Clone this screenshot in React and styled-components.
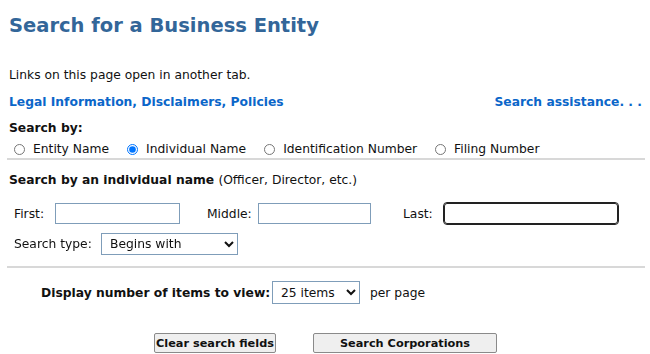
import React from "react";
import styled, { createGlobalStyle } from "styled-components";

const Global = createGlobalStyle`
  html, body { margin: 0; padding: 0; background: #fff; }
  body { font-family: "DejaVu Sans", Verdana, sans-serif; font-size: 12.3px; color: #111; }
`;

const Page = styled.div`
  padding: 13px 8px 0 8px;
  width: 650px;
  box-sizing: border-box;
`;

const Title = styled.h1`
  margin: 0 0 0 1px;
  font-size: 19.5px;
  font-weight: bold;
  color: #336699;
  line-height: 26px;
`;

const Note = styled.p`
  margin: 28px 0 0 1px;
  line-height: 16px;
`;

const LinkRow = styled.div`
  display: flex;
  justify-content: space-between;
  margin: 11px 0 0 1px;
  line-height: 16px;
`;

const Link = styled.a`
  color: #0b66c9;
  font-weight: bold;
  text-decoration: none;
`;

const Label = styled.div`
  font-weight: bold;
  margin: ${(p) => p.$mt || 0}px 0 0 1px;
  line-height: 16px;
`;

const RadioRow = styled.div`
  display: flex;
  align-items: center;
  gap: 18px;
  margin: 5px 0 0 6px;
  line-height: 16px;
`;

const RadioLabel = styled.label`
  display: flex;
  align-items: center;
  gap: 8px;
`;

const Radio = styled.input`
  margin: 0;
  width: 11px;
  height: 11px;
`;

const Rule = styled.hr`
  border: none;
  border-top: 2px solid #d8d8d8;
  margin: ${(p) => p.$mt || 0}px 0 0 -1px;
  width: 638px;
`;

const Normal = styled.span`
  font-weight: normal;
`;

const FieldRow = styled.div`
  display: flex;
  align-items: center;
  margin: ${(p) => p.$mt || 0}px 0 0 6px;
`;

const FieldLabel = styled.span`
  box-sizing: border-box;
  width: ${(p) => p.$w}px;
  padding-left: ${(p) => p.$pl || 0}px;
  white-space: nowrap;
`;

const TextInput = styled.input`
  box-sizing: border-box;
  width: ${(p) => p.$w}px;
  height: 21px;
  border: 1px solid ${(p) => (p.$focus ? "#222" : "#7f9db9")};
  border-radius: ${(p) => (p.$focus ? "3px" : "0")};
  outline: ${(p) => (p.$focus ? "1px solid #222" : "none")};
  font-family: inherit;
  font-size: 12px;
  padding: 1px 3px;
  margin: 0 0 0 ${(p) => (p.$focus ? 1 : 0)}px;
`;

const Select = styled.select`
  box-sizing: border-box;
  width: ${(p) => p.$w}px;
  height: ${(p) => p.$h || 22}px;
  border: 1px solid #7f9db9;
  border-radius: 0;
  background: #fff;
  font-family: inherit;
  font-size: 12.3px;
  color: #111;
  padding: 0 2px 0 4px;
  margin: 0;
`;

const DisplayRow = styled.div`
  display: flex;
  align-items: center;
  margin: 13px 0 0 33px;
`;

const Bold = styled.span`
  font-weight: bold;
  width: 231px;
  white-space: nowrap;
`;

const After = styled.span`
  margin-left: 10px;
`;

const ButtonRow = styled.div`
  display: flex;
  justify-content: flex-start;
  gap: 37px;
  margin: 29px 0 0 146px;
`;

const Button = styled.button`
  box-sizing: border-box;
  width: ${(p) => p.$w}px;
  height: 20px;
  font-family: inherit;
  font-size: 11.3px;
  font-weight: bold;
  color: #111;
  background: #efefef;
  border: 1px solid #8a8a8a;
  border-radius: 2px;
  padding: 0;
`;

export default function App() {
  return (
    <Page>
      <Global />
      <Title>Search for a Business Entity</Title>
      <Note>Links on this page open in another tab.</Note>
      <LinkRow>
        <Link href="#">Legal Information, Disclaimers, Policies</Link>
        <Link href="#">Search assistance. . .</Link>
      </LinkRow>
      <Label $mt={10}>Search by:</Label>
      <RadioRow>
        <RadioLabel><Radio type="radio" name="by" />Entity Name</RadioLabel>
        <RadioLabel><Radio type="radio" name="by" defaultChecked />Individual Name</RadioLabel>
        <RadioLabel><Radio type="radio" name="by" />Identification Number</RadioLabel>
        <RadioLabel><Radio type="radio" name="by" />Filing Number</RadioLabel>
      </RadioRow>
      <Rule $mt={1} />
      <Label $mt={12}>
        Search by an individual name <Normal>(Officer, Director, etc.)</Normal>
      </Label>
      <FieldRow $mt={15}>
        <FieldLabel $w={41}>First:</FieldLabel>
        <TextInput $w={125} />
        <FieldLabel $w={78} $pl={27}>Middle:</FieldLabel>
        <TextInput $w={113} />
        <FieldLabel $w={72} $pl={32}>Last:</FieldLabel>
        <TextInput $w={174} $focus autoFocus />
      </FieldRow>
      <FieldRow $mt={9}>
        <FieldLabel $w={87}>Search type:</FieldLabel>
        <Select $w={137} defaultValue="b">
          <option value="b">Begins with</option>
          <option value="c">Contains</option>
          <option value="e">Exact match</option>
        </Select>
      </FieldRow>
      <Rule $mt={11} />
      <DisplayRow>
        <Bold>Display number of items to view:</Bold>
        <Select $w={88} $h={23} defaultValue="25">
          <option value="25">25 items</option>
          <option value="50">50 items</option>
          <option value="100">100 items</option>
        </Select>
        <After>per page</After>
      </DisplayRow>
      <ButtonRow>
        <Button $w={122}>Clear search fields</Button>
        <Button $w={184}>Search Corporations</Button>
      </ButtonRow>
    </Page>
  );
}
